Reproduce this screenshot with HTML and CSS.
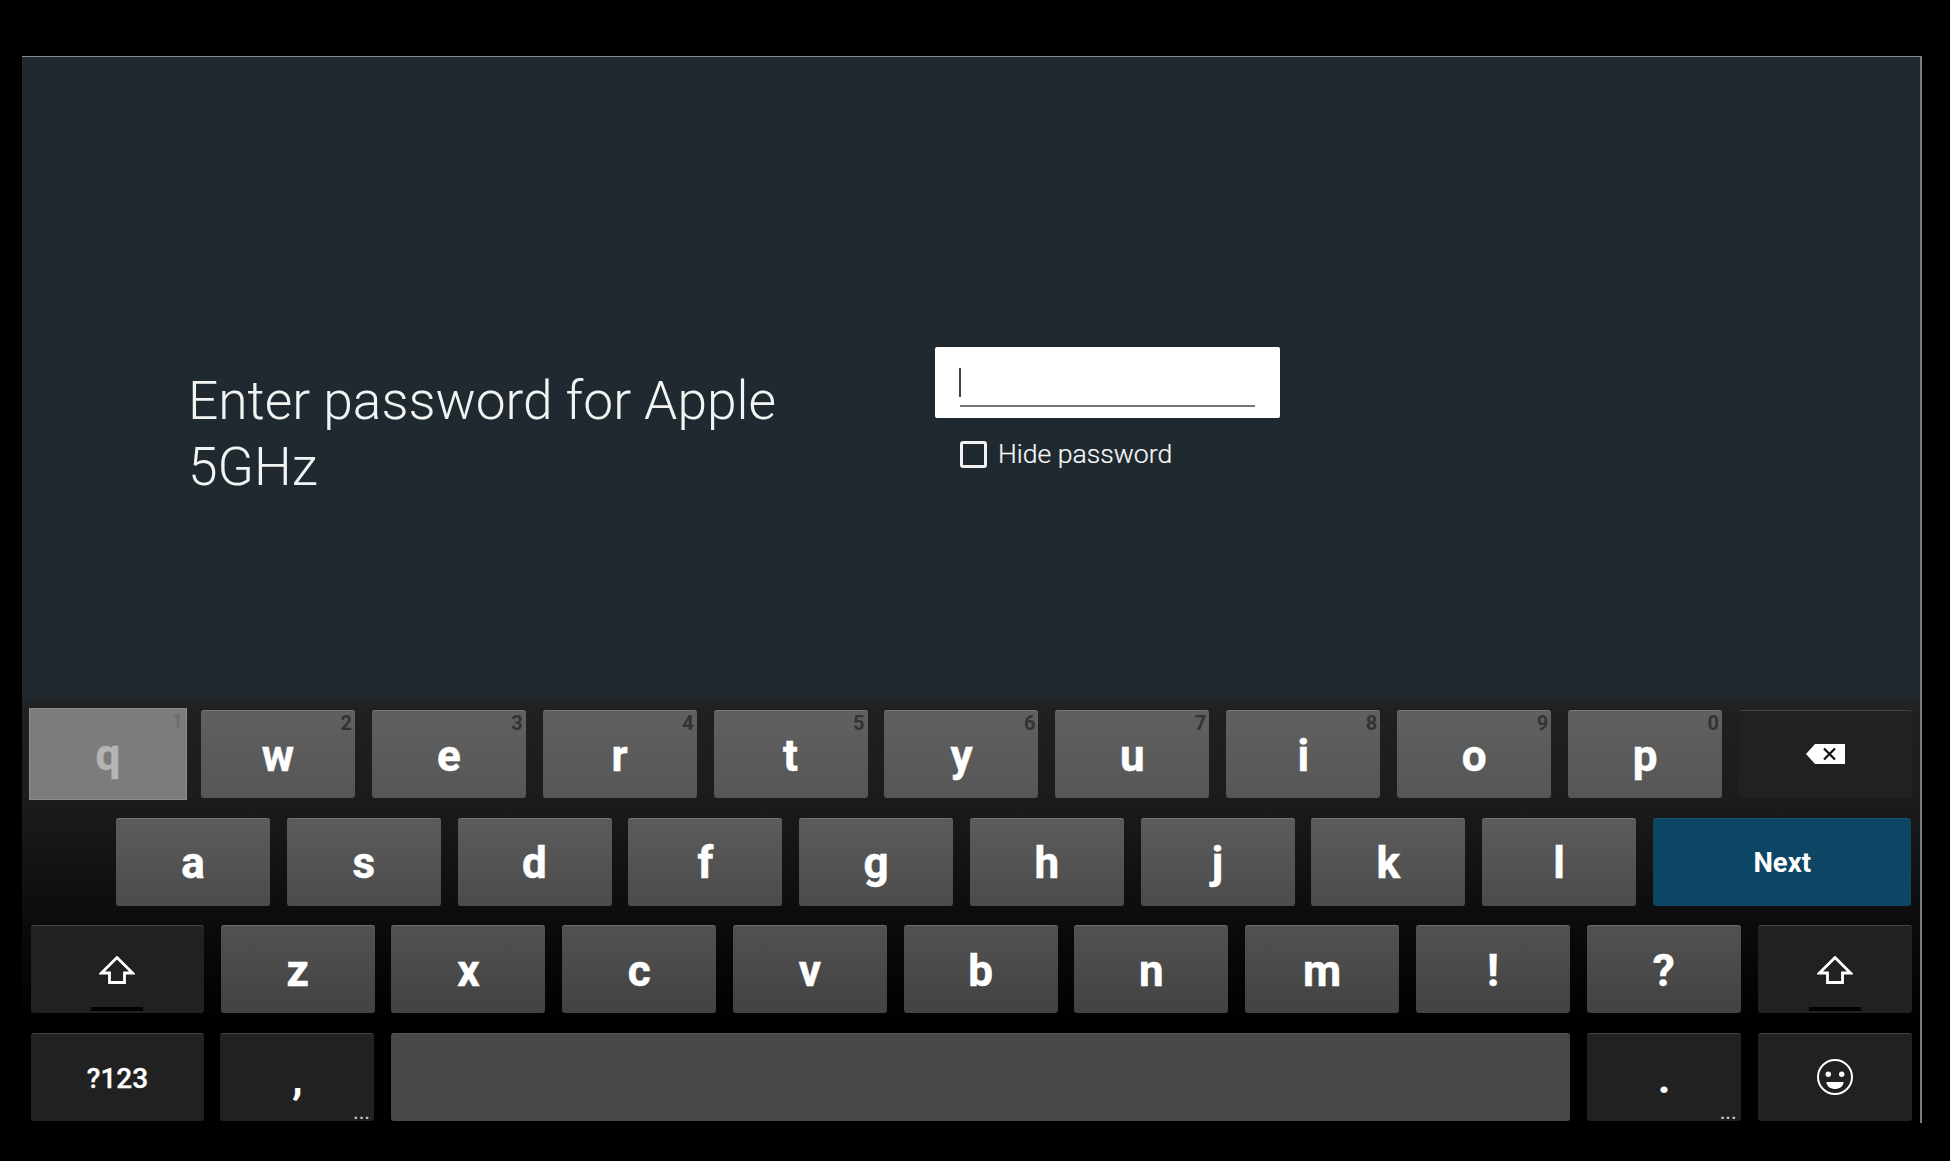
FILE: index.html
```html
<!DOCTYPE html>
<html lang="en">
<head>
<meta charset="utf-8">
<title>Enter password</title>
<link rel="stylesheet" href="styles.css">
</head>
<body>
<main class="screen">
  <section class="content">
    <h1 class="title">Enter password for Apple 5GHz</h1>
    <div class="form">
      <div class="field"><span class="caret"></span></div>
      <label class="hide"><span class="box"></span><span>Hide password</span></label>
    </div>
  </section>
  <section class="keyboard">
    <div class="row row1">
      <div class="key letter pressed">q<span class="num">1</span></div>
      <div class="key letter">w<span class="num">2</span></div>
      <div class="key letter">e<span class="num">3</span></div>
      <div class="key letter">r<span class="num">4</span></div>
      <div class="key letter">t<span class="num">5</span></div>
      <div class="key letter">y<span class="num">6</span></div>
      <div class="key letter">u<span class="num">7</span></div>
      <div class="key letter">i<span class="num">8</span></div>
      <div class="key letter">o<span class="num">9</span></div>
      <div class="key letter">p<span class="num">0</span></div>
      <div class="key fn back">
        <svg width="39" height="20" viewBox="0 0 39 20"><path d="M0 10 9 0H39V20H9Z" fill="#fff"/><path d="M18 4.500 29 15.500M29 4.500 18 15.500" stroke="#111" stroke-width="2.200" fill="none"/></svg>
      </div>
    </div>
    <div class="row row2">
      <div class="key letter">a</div>
      <div class="key letter">s</div>
      <div class="key letter">d</div>
      <div class="key letter">f</div>
      <div class="key letter">g</div>
      <div class="key letter">h</div>
      <div class="key letter">j</div>
      <div class="key letter">k</div>
      <div class="key letter">l</div>
      <div class="key next">Next</div>
    </div>
    <div class="row row3">
      <div class="key fn shift wide">
        <svg width="36" height="28" viewBox="0 0 36 28"><path d="M18 1.500 33.500 17H25.500V26.500H10.500V17H2.500Z" fill="none" stroke="#fff" stroke-width="2.800"/></svg>
        <span class="shift-bar"></span>
      </div>
      <div class="key letter">z</div>
      <div class="key letter">x</div>
      <div class="key letter">c</div>
      <div class="key letter">v</div>
      <div class="key letter">b</div>
      <div class="key letter">n</div>
      <div class="key letter">m</div>
      <div class="key letter">!</div>
      <div class="key letter">?</div>
      <div class="key fn shift">
        <svg width="36" height="28" viewBox="0 0 36 28"><path d="M18 1.500 33.500 17H25.500V26.500H10.500V17H2.500Z" fill="none" stroke="#fff" stroke-width="2.800"/></svg>
        <span class="shift-bar"></span>
      </div>
    </div>
    <div class="row row4">
      <div class="key fn sym wide">?123</div>
      <div class="key fn punct">,<span class="more">...</span></div>
      <div class="key space"></div>
      <div class="key fn punct">.<span class="more">...</span></div>
      <div class="key fn">
        <svg width="38" height="38" viewBox="0 0 38 38"><circle cx="19" cy="19" r="17" fill="none" stroke="#fff" stroke-width="2"/><circle cx="12.300" cy="16.300" r="2.700" fill="#fff"/><circle cx="25.700" cy="16.300" r="2.700" fill="#fff"/><path d="M10.300 24H27.700C27 29 23 31 19 31S11 29 10.300 24Z" fill="#fff"/></svg>
      </div>
    </div>
  </section>
</main>
</body>
</html>
```
FILE: styles.css
```css
* { box-sizing: border-box; }
html, body { margin: 0; height: 100%; background: #000; }
body { font-family: Roboto, "Liberation Sans", sans-serif; overflow: hidden; }

.screen {
  width: 1900px;
  height: 1067px;
  margin: 56px 0 0 22px;
  border-top: 1px solid #8a8a8a;
  border-right: 2px solid #7c7c7c;
  background: #20292f;
  display: flex;
  flex-direction: column;
}

.content {
  height: 638px;
  display: flex;
  padding: 290px 0 0 166px;
}
.title {
  width: 747px;
  margin: 21px 0 0;
  padding-right: 100px;
  font-weight: 300;
  font-size: 53.300px;
  line-height: 66px;
  color: #f2f4f4;
}
.form { width: 345px; }
.field {
  height: 71px;
  background: #fff;
  border-radius: 2px;
  position: relative;
}
.field::after {
  content: "";
  position: absolute;
  left: 25px;
  right: 25px;
  top: 58px;
  height: 2px;
  background: #777;
}
.caret {
  position: absolute;
  left: 24px;
  top: 21px;
  width: 2px;
  height: 29px;
  background: #444;
}
.hide {
  display: flex;
  align-items: center;
  gap: 11px;
  margin: 22px 0 0 25px;
  font-weight: 300;
  font-size: 26.600px;
  line-height: 28px;
  color: #f7f8f8;
  -webkit-text-stroke: .2px #f7f8f8;
}
.box {
  width: 27px;
  height: 27px;
  border: 3.500px solid #f2f2f2;
  border-radius: 3px;
}

.keyboard {
  flex: 1;
  padding-top: 15px;
  display: flex;
  flex-direction: column;
  gap: 19.6px;
  background: linear-gradient(#20292f 0, #202020 14px, #1c1c1c 100px, #0a0a0a 240px, #000 330px);
}
.row { display: flex; height: 88px; }
.row1 { padding-left: 8px; gap: 16.9px; }
.row2 { padding-left: 94px; gap: 16.75px; }
.row3 { padding-left: 9px; gap: 16.75px; }
.row4 { padding-left: 9px; gap: 16.6px; }

.key {
  position: relative;
  flex: none;
  width: 154px;
  height: 88px;
  border-radius: 3px;
  display: flex;
  align-items: center;
  justify-content: center;
  color: #fff;
  font-weight: 700;
  background: linear-gradient(rgba(255,255,255,.29), rgba(255,255,255,.26));
  border-top: 1px solid rgba(255,255,255,.2);
}
.letter {
  font-size: 44px;
  line-height: 1;
  padding-top: 2px;
  -webkit-text-stroke: .5px currentColor;
}
.num {
  position: absolute;
  top: 0;
  right: 3px;
  font-size: 20px;
  line-height: 24px;
  color: #333;
  -webkit-text-stroke: 0;
}
.pressed {
  width: 158px;
  height: 92px;
  margin: -2px -3px -2px -1px;
  border-radius: 0;
  background: #7c7c7c;
  border: 1px solid #8e8e8e;
  color: #b4b4b4;
}
.pressed .num { color: #6e6e6e; }

.fn { background: #212121; border-top: 1px solid #444; }
.back { width: 173px; padding-bottom: 2px; }
.wide { width: 172.9px; }
.sym { font-size: 28px; font-weight: 500; padding-top: 2px; -webkit-text-stroke: .3px #fff; }
.punct { font-size: 44px; align-items: flex-end; padding-bottom: 21px; line-height: 1; }
.punct .more {
  position: absolute;
  right: 4px;
  bottom: 0;
  font-size: 16px;
  line-height: 14px;
  letter-spacing: 1px;
  color: #ccc;
}
.shift + .letter { margin-left: 0; }
.letter + .shift { margin-left: .5px; }
.shift-bar {
  position: absolute;
  left: 50%;
  bottom: 2px;
  width: 52px;
  margin-left: -26px;
  height: 4px;
  background: #000;
}
.next {
  width: 258px;
  padding-left: 1px;
  background: #0d4565;
  border-top: 1px solid #1a5273;
  font-size: 27.500px;
}
.space { width: 1179.4px; background: #484848; border-top-color: #555; }
```
